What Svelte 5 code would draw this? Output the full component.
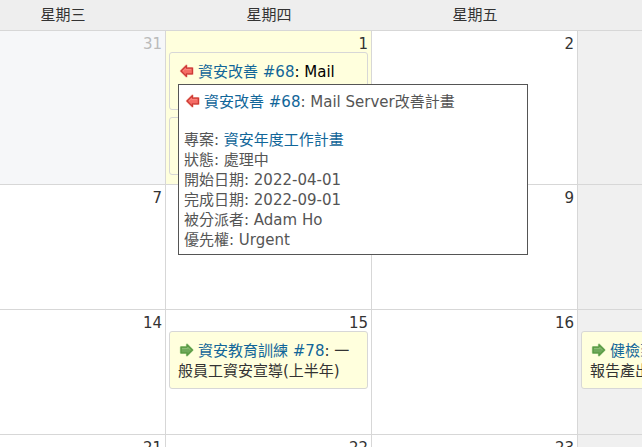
<script>
  const weekdays = ['星期三', '星期四', '星期五', '星期六'];

  const mailIssue = {
    direction: 'end',
    link: '資安改善 #68',
    subject: 'Mail Server改善計畫',
    active: true,
    tip: {
      project: '資安年度工作計畫',
      fields: [
        ['狀態', '處理中'],
        ['開始日期', '2022-04-01'],
        ['完成日期', '2022-09-01'],
        ['被分派者', 'Adam Ho'],
        ['優先權', 'Urgent']
      ]
    }
  };

  const weeks = [
    [
      { day: 31, kind: 'other', issues: [] },
      { day: 1, kind: 'today', issues: [mailIssue, {}] },
      { day: 2, issues: [] },
      { day: 3, kind: 'weekend', issues: [] }
    ],
    [
      { day: 7, issues: [] },
      { day: 8, issues: [] },
      { day: 9, issues: [] },
      { day: 10, kind: 'weekend', issues: [] }
    ],
    [
      { day: 14, issues: [] },
      { day: 15, issues: [{ direction: 'start', link: '資安教育訓練 #78', subject: '一般員工資安宣導(上半年)' }] },
      { day: 16, issues: [] },
      { day: 17, kind: 'weekend', issues: [{ direction: 'start', link: '健檢到場服務資 #80', subject: '報告產出' }] }
    ],
    [
      { day: 21, issues: [] },
      { day: 22, issues: [] },
      { day: 23, issues: [] },
      { day: 24, kind: 'weekend', issues: [] }
    ]
  ];
</script>

{#snippet arrow(direction)}
  {#if direction === 'end'}
    <svg class="arrow" viewBox="0 0 16 16" aria-hidden="true">
      <path d="M3 8 L8.4 2.6 V5.2 H14.4 V10.8 H8.4 V13.4 Z" fill="#f4645f" stroke="#f6b3a4" stroke-width="2.4" stroke-linejoin="round" />
      <path d="M3 8 L8.4 2.6 V5.2 H14.4 V10.8 H8.4 V13.4 Z" fill="#f56b65" stroke="#cc3a35" stroke-width="1.2" stroke-linejoin="round" />
      <path d="M5 8 L7.6 5.6 V6.6 H13" fill="none" stroke="#fb8f86" stroke-width="0.8" />
    </svg>
  {:else}
    <svg class="arrow" viewBox="0 0 16 16" aria-hidden="true">
      <path d="M14.4 8 L9 2.6 V5.2 H3 V10.8 H9 V13.4 Z" fill="#7db560" stroke="#bcdca2" stroke-width="2.4" stroke-linejoin="round" />
      <path d="M14.4 8 L9 2.6 V5.2 H3 V10.8 H9 V13.4 Z" fill="#6fa95a" stroke="#55973f" stroke-width="1.2" stroke-linejoin="round" />
      <path d="M4 6.6 H9.8 V5.4 L12.2 7.8" fill="none" stroke="#94c47e" stroke-width="0.8" />
    </svg>
  {/if}
{/snippet}

<div class="viewport">
  <table class="cal">
    <thead>
      <tr>
        {#each weekdays as name}
          <th scope="col">{name}</th>
        {/each}
      </tr>
    </thead>
    <tbody>
      {#each weeks as week}
        <tr>
          {#each week as cell}
            <td class={cell.kind}>
              <p class="day-num">{cell.day}</p>
              {#each cell.issues as issue}
                <div class="issue" class:active={issue.active}>
                  {#if issue.link}
                    {@render arrow(issue.direction)}<a href="#issue">{issue.link}</a>: {issue.subject}
                  {/if}
                  {#if issue.tip}
                    <div class="tip">
                      <p class="title">{@render arrow(issue.direction)}<a href="#issue">{issue.link}</a>: {issue.subject}</p>
                      <p>專案: <a href="#project">{issue.tip.project}</a></p>
                      {#each issue.tip.fields as [label, value]}
                        <p>{label}: {value}</p>
                      {/each}
                    </div>
                  {/if}
                </div>
              {/each}
            </td>
          {/each}
        </tr>
      {/each}
    </tbody>
  </table>
</div>

<style>
  :global(body) {
    margin: 0;
    background: #fff;
  }

  .viewport {
    height: 100vh;
    overflow: hidden;
    color: #333;
    font: 15px/20px Verdana, "DejaVu Sans", "Noto Sans CJK TC", sans-serif;
  }

  .cal {
    width: max(824px, 128%);
    margin-left: -40px;
    table-layout: fixed;
    border-collapse: separate;
    border-spacing: 0;
  }

  th {
    height: 30px;
    padding: 0;
    background: #eee;
    border-bottom: 1px solid #d7d7d7;
    font-weight: normal;
  }

  td {
    height: 122px;
    padding: 0 3px 2px;
    vertical-align: top;
    border-right: 1px solid #d7d7d7;
    border-bottom: 1px solid #d7d7d7;
  }

  td.other {
    background: #f6f7f9;
  }

  td.other .day-num {
    color: #bbb;
  }

  td.today {
    background: #ffffdd;
  }

  td.weekend {
    background: #f0f0f0;
  }

  p {
    margin: 0;
  }

  .day-num {
    padding-top: 5px;
    line-height: 16px;
    text-align: right;
  }

  .issue {
    position: relative;
    min-height: 40px;
    margin-bottom: 7px;
    padding: 9px 8px 7px;
    background: #ffffdd;
    border: 1px solid #d7d7d7;
    border-radius: 3px;
  }

  .issue.active {
    color: #000;
    z-index: 1;
  }

  a {
    color: #169;
    text-decoration: none;
  }

  a:hover {
    text-decoration: underline;
  }

  .arrow {
    width: 16px;
    height: 16px;
    margin-right: 4px;
    vertical-align: -2px;
  }

  .tip {
    position: absolute;
    top: 31px;
    left: 8px;
    width: 338px;
    padding: 7px 5px 4px;
    color: #555;
    background: #fff;
    border: 1px solid #555;
  }

  .tip .title {
    margin-bottom: 18px;
  }
</style>
